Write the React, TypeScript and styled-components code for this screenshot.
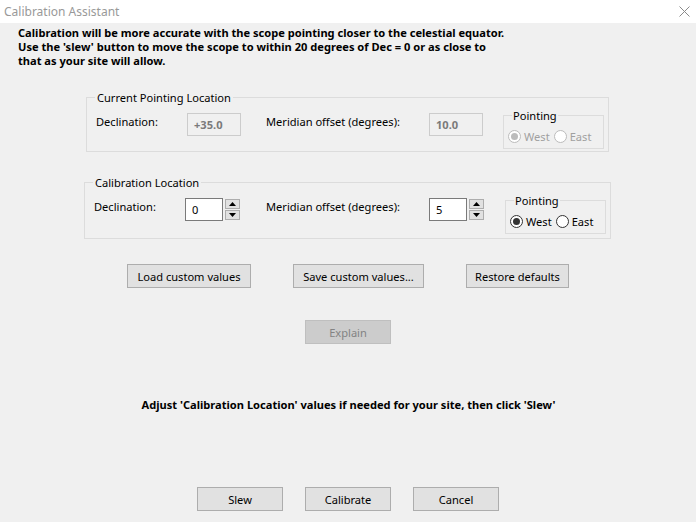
import styled, { createGlobalStyle } from 'styled-components';

const GlobalStyle = createGlobalStyle`
  * {
    box-sizing: border-box;
  }

  body {
    margin: 0;
    background: #f0f0f0;
    font-family: 'Noto Sans', 'Liberation Sans', sans-serif;
    font-size: 11.1px;
    color: #000;
  }
`;

const Window = styled.div`
  width: 696px;
  height: 522px;
  display: flex;
  flex-direction: column;
  background: #f0f0f0;
  overflow: hidden;
`;

const TitleBar = styled.div`
  height: 23px;
  flex: none;
  padding: 0 6px 0 4px;
  background: #fff;
  display: flex;
  align-items: center;
  justify-content: space-between;
  color: #999;
  font-size: 12px;
`;

const Body = styled.div`
  display: flex;
  flex-direction: column;
  padding-top: 3px;
`;

const Intro = styled.p`
  margin: 0;
  padding-left: 18px;
  font-weight: bold;
  line-height: 14px;
`;

const Group = styled.fieldset<{ $left: number; $width: number; $top: number; $bottom: number }>`
  margin: ${(p) => p.$top}px 0 0 ${(p) => p.$left}px;
  width: ${(p) => p.$width}px;
  padding: 8px 4px ${(p) => p.$bottom}px 9px;
  border: 1px solid #dcdcdc;

  > legend {
    padding: 0 2px;
    margin-left: -1px;
    line-height: 15px;
  }
`;

const Row = styled.div<{ $valueCol: number }>`
  display: grid;
  grid-template-columns: 91px ${(p) => p.$valueCol}px 163px 1fr 101px;
  align-items: start;
`;

const FieldLabel = styled.div`
  line-height: 15px;
  padding-top: 1px;
`;

const ValueCell = styled.div`
  display: flex;
  gap: 2px;
`;

const ValueBox = styled.div<{ $width: number; $disabled?: boolean }>`
  width: ${(p) => p.$width}px;
  height: 23px;
  padding-left: 6px;
  display: flex;
  align-items: center;
  border: 1px solid ${(p) => (p.$disabled ? '#cccccc' : '#7a7a7a')};
  background: ${(p) => (p.$disabled ? '#f0f0f0' : '#fff')};
  color: ${(p) => (p.$disabled ? '#7a7a7a' : '#000')};
  font-weight: ${(p) => (p.$disabled ? 'bold' : 'normal')};
`;

const Spinner = styled.div`
  display: flex;
  flex-direction: column;
  gap: 1px;
  padding-top: 1px;
`;

const SpinButton = styled.div`
  width: 15px;
  height: 10px;
  border: 1px solid #adadad;
  background: #e1e1e1;
  display: flex;
  align-items: center;
  justify-content: center;
`;

const Pointing = styled.fieldset<{ $disabled?: boolean }>`
  margin: -5px 0 0 0;
  padding: 4px 4px 4px 4px;
  border: 1px solid #dcdcdc;
  color: ${(p) => (p.$disabled ? '#a0a0a0' : '#000')};

  > legend {
    padding: 0 1px;
    margin-left: 4px;
    line-height: 15px;
    color: #000;
  }
`;

const RadioRow = styled.div`
  display: flex;
  align-items: center;
  gap: 2px;
  height: 16px;
  margin-top: 1px;
`;

const RadioDot = styled.span<{ $checked?: boolean; $disabled?: boolean }>`
  width: 13px;
  height: 13px;
  border-radius: 50%;
  border: 1px solid ${(p) => (p.$disabled ? '#bcbcbc' : '#333')};
  background: #fff;
  display: inline-flex;
  align-items: center;
  justify-content: center;
  margin-right: 1px;

  &::after {
    content: '';
    width: 7px;
    height: 7px;
    border-radius: 50%;
    background: ${(p) => (p.$disabled ? '#bcbcbc' : '#333')};
    display: ${(p) => (p.$checked ? 'block' : 'none')};
  }
`;

const RadioText = styled.span`
  margin-right: 2px;
`;

const ButtonRow = styled.div<{ $top: number; $gap: number }>`
  margin-top: ${(p) => p.$top}px;
  display: flex;
  justify-content: center;
  gap: ${(p) => p.$gap}px;
`;

const Button = styled.div<{ $width: number; $disabled?: boolean }>`
  width: ${(p) => p.$width}px;
  height: 24px;
  display: flex;
  align-items: center;
  justify-content: center;
  border: 1px solid ${(p) => (p.$disabled ? '#bfbfbf' : '#adadad')};
  background: ${(p) => (p.$disabled ? '#cccccc' : '#e1e1e1')};
  color: ${(p) => (p.$disabled ? '#838383' : '#000')};
`;

const Message = styled.div`
  margin-top: 53px;
  text-align: center;
  font-weight: bold;
  line-height: 15px;
  padding-left: 1px;
`;

const Spin = ({ down }: { down?: boolean }) => (
  <SpinButton>
    <svg width='7' height='4' viewBox='0 0 7 4'>
      <path d={down ? 'M0 0h7L3.5 4z' : 'M3.5 0L7 4H0z'} fill='#000' />
    </svg>
  </SpinButton>
);

const Radio = ({
  label,
  checked,
  disabled,
}: {
  label: string;
  checked?: boolean;
  disabled?: boolean;
}) => (
  <>
    <RadioDot $checked={checked} $disabled={disabled} />
    <RadioText>{label}</RadioText>
  </>
);

const App = () => {
  return (
    <Window>
      <GlobalStyle />
      <TitleBar>
        <span>Calibration Assistant</span>
        <svg width='11' height='11' viewBox='0 0 11 11'>
          <path d='M0.5 0.5l10 10M10.5 0.5l-10 10' stroke='#8a8a8a' strokeWidth='1' />
        </svg>
      </TitleBar>
      <Body>
        <Intro>
          Calibration will be more accurate with the scope pointing closer to the celestial equator.
          <br />
          Use the 'slew' button to move the scope to within 20 degrees of Dec = 0 or as close to
          <br />
          that as your site will allow.
        </Intro>

        <Group $left={86} $width={523} $top={22} $bottom={2}>
          <legend>Current Pointing Location</legend>
          <Row $valueCol={79}>
            <FieldLabel>Declination:</FieldLabel>
            <ValueCell>
              <ValueBox $width={54} $disabled>
                +35.0
              </ValueBox>
            </ValueCell>
            <FieldLabel>Meridian offset (degrees):</FieldLabel>
            <ValueCell>
              <ValueBox $width={54} $disabled>
                10.0
              </ValueBox>
            </ValueCell>
            <Pointing $disabled>
              <legend>Pointing</legend>
              <RadioRow>
                <Radio label='West' checked disabled />
                <Radio label='East' disabled />
              </RadioRow>
            </Pointing>
          </Row>
        </Group>

        <Group $left={84} $width={527} $top={23} $bottom={4}>
          <legend>Calibration Location</legend>
          <Row $valueCol={81}>
            <FieldLabel>Declination:</FieldLabel>
            <ValueCell>
              <ValueBox $width={38}>0</ValueBox>
              <Spinner>
                <Spin />
                <Spin down />
              </Spinner>
            </ValueCell>
            <FieldLabel>Meridian offset (degrees):</FieldLabel>
            <ValueCell>
              <ValueBox $width={38}>5</ValueBox>
              <Spinner>
                <Spin />
                <Spin down />
              </Spinner>
            </ValueCell>
            <Pointing>
              <legend>Pointing</legend>
              <RadioRow>
                <Radio label='West' checked />
                <Radio label='East' />
              </RadioRow>
            </Pointing>
          </Row>
        </Group>

        <ButtonRow $top={25} $gap={42}>
          <Button $width={124}>Load custom values</Button>
          <Button $width={131}>Save custom values...</Button>
          <Button $width={103}>Restore defaults</Button>
        </ButtonRow>

        <ButtonRow $top={32} $gap={0}>
          <Button $width={86} $disabled>
            Explain
          </Button>
        </ButtonRow>

        <Message>Adjust 'Calibration Location' values if needed for your site, then click 'Slew'</Message>

        <ButtonRow $top={75} $gap={22}>
          <Button $width={86}>Slew</Button>
          <Button $width={86}>Calibrate</Button>
          <Button $width={86}>Cancel</Button>
        </ButtonRow>
      </Body>
    </Window>
  );
};

export default App;
